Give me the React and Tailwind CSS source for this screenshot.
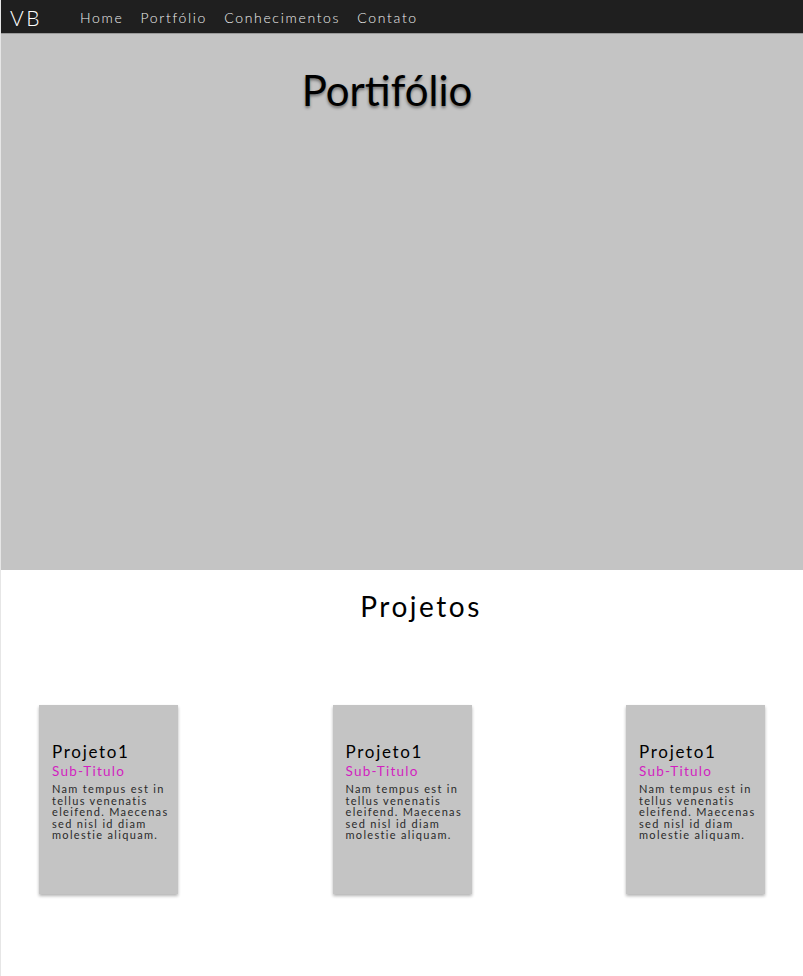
export default function App() {
  const font = { fontFamily: 'Lato, "Noto Sans", sans-serif' };
  const cards = [0, 1, 2];
  return (
    <div className="w-[803px] min-h-[976px] bg-white border-l border-[#e6e6e6]" style={font}>
      <header className="h-[34px] bg-[#1f1f1f] border-b border-[#9a9a9a] flex items-center pl-[9px] pt-[2px]">
        <div className="text-white text-[21px] tracking-[0.12em] w-[70px] font-light">VB</div>
        <nav className="flex gap-[17px] text-[#f0f0f0] text-[14px] tracking-[0.12em] font-light">
          <span>Home</span>
          <span>Portfólio</span>
          <span>Conhecimentos</span>
          <span>Contato</span>
        </nav>
      </header>
      <section className="h-[536px] bg-[#c4c4c4] flex justify-center pt-[26px] pr-[30px]">
        <h1 className="text-[42px] leading-[60px] h-[60px] text-black" style={{ textShadow: '0 2px 3px rgba(0,0,0,0.45)', fontFamily: 'Lato, sans-serif' }}>
          Portifólio
        </h1>
      </section>
      <section className="pb-[80px]">
        <h2 className="text-center text-[28px] tracking-[0.09em] text-black pl-[38px] pt-[16px] leading-[40px]">Projetos</h2>
        <div className="flex justify-between px-[38px] mt-[79px]">
          {cards.map((i) => (
            <div key={i} className="w-[139px] h-[189px] bg-[#c4c4c4] shadow-[0_2px_3px_rgba(0,0,0,0.3)] pl-[13px] pr-[4px] pt-[36px]">
              <div className="text-[17px] tracking-[0.1em] text-black leading-[22px]">Projeto1</div>
              <div className="text-[13.5px] tracking-[0.09em] text-[#d21fc0] leading-[16px]">Sub-Titulo</div>
              <p className="text-[11px] tracking-[0.12em] leading-[11.5px] text-[#2a2a2a] mt-[4px]">
                Nam tempus est in tellus venenatis eleifend. Maecenas sed nisl id diam molestie aliquam.
              </p>
            </div>
          ))}
        </div>
      </section>
    </div>
  );
}
